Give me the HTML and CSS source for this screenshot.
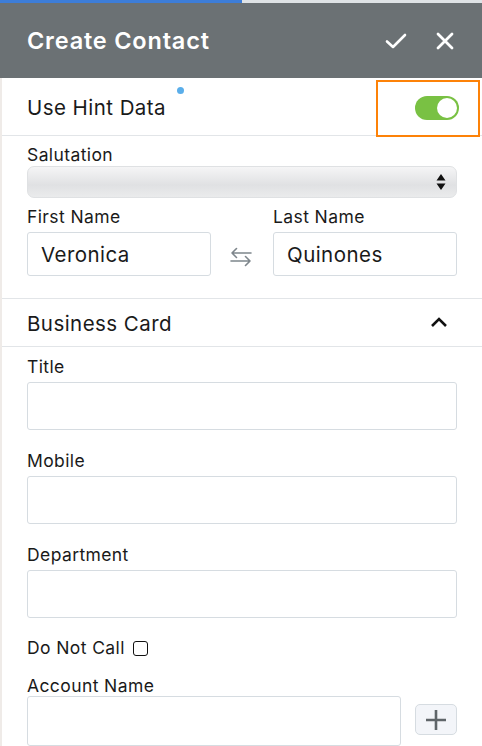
FILE: index.html
```html
<!DOCTYPE html>
<html>
<head>
<meta charset="utf-8">
<link rel="stylesheet" href="styles.css">
</head>
<body>
<div class="panel">
  <div class="progress"><div class="progress-fill"></div></div>
  <header class="topbar">
    <h1 class="topbar-title">Create Contact</h1>
    <div class="topbar-actions">
      <svg class="icon-check" width="22" height="18" viewBox="0 0 22 18"><path d="M2 9.5 L8 15 L20 3" fill="none" stroke="#fff" stroke-width="2.6" stroke-linecap="round" stroke-linejoin="round"/></svg>
      <svg class="icon-close" width="20" height="20" viewBox="0 0 20 20"><path d="M3 3 L17 17 M17 3 L3 17" fill="none" stroke="#fff" stroke-width="2.8" stroke-linecap="round"/></svg>
    </div>
  </header>

  <div class="hint-row">
    <div class="hint-label">Use Hint Data<span class="hint-dot"></span></div>
    <div class="toggle"><span class="toggle-knob"></span></div>
    <div class="highlight"></div>
  </div>

  <div class="section">
    <div class="label label-first">Salutation</div>
    <div class="select">
      <svg class="select-arrows" width="10" height="18" viewBox="0 0 10 18"><path d="M5 1 L9.5 7.5 L0.5 7.5 Z M5 17 L9.5 10.5 L0.5 10.5 Z" fill="#111"/></svg>
    </div>

    <div class="name-row">
      <div class="name-col">
        <div class="label">First Name</div>
        <div class="input input-name">Veronica</div>
      </div>
      <div class="swap">
        <svg width="24" height="20" viewBox="0 0 24 20"><path d="M22 6 H3 M7.5 1.5 L3 6 M7.5 10.5 L3 6 M2 14 H21 M16.5 9.5 L21 14 M16.5 18.5 L21 14" fill="none" stroke="#7e868c" stroke-width="1.6" stroke-linecap="round" stroke-linejoin="round"/></svg>
      </div>
      <div class="name-col">
        <div class="label">Last Name</div>
        <div class="input input-name">Quinones</div>
      </div>
    </div>
  </div>

  <div class="group-head">
    <span class="group-title">Business Card</span>
    <svg class="chevron" width="18" height="12" viewBox="0 0 18 12"><path d="M2 10 L9 3 L16 10" fill="none" stroke="#111" stroke-width="2.6" stroke-linejoin="miter"/></svg>
  </div>

  <div class="section section-card">
    <div class="label label-first">Title</div>
    <div class="input input-tall"></div>

    <div class="label label-gap">Mobile</div>
    <div class="input input-tall"></div>

    <div class="label label-gap">Department</div>
    <div class="input input-tall"></div>

    <div class="check-row">Do Not Call <span class="checkbox"></span></div>

    <div class="label label-account">Account Name</div>
    <div class="account-row">
      <div class="input input-account"></div>
      <div class="add-btn">
        <svg width="22" height="22" viewBox="0 0 22 22"><path d="M11 1 V21 M1 11 H21" fill="none" stroke="#5f6569" stroke-width="2.6"/></svg>
      </div>
    </div>
  </div>
</div>
</body>
</html>
```

FILE: styles.css
```css
* { box-sizing: border-box; }
html, body { margin: 0; padding: 0; }
body {
  background: #efebe8;
  font-family: Inter, "Noto Sans", "Liberation Sans", sans-serif;
  color: #1a1a1a;
  width: 482px;
  height: 746px;
  overflow: hidden;
}
.panel {
  margin-left: 2px;
  background: #fff;
  min-height: 746px;
}
.progress {
  height: 3px;
  background: #dfe3e6;
  margin-left: -2px;
}
.progress-fill {
  width: 242px;
  height: 3px;
  background: #3d7dd8;
}
.topbar {
  height: 75px;
  background: #6b7174;
  display: flex;
  align-items: center;
  justify-content: space-between;
  margin-left: -2px;
  padding: 0 27px 0 27px;
}
.topbar-title {
  margin: 0;
  color: #fff;
  font-size: 23.5px;
  font-weight: 600;
  letter-spacing: 0.8px;
}
.topbar-actions {
  display: flex;
  align-items: center;
  gap: 28px;
}
.hint-row {
  position: relative;
  height: 58px;
  border-bottom: 1px solid #e2e5e8;
  display: flex;
  align-items: center;
  justify-content: space-between;
  padding: 0 23px 0 25px;
}
.hint-label {
  font-size: 20.5px;
  letter-spacing: 0.45px;
  position: relative;
  margin-top: 2px;
}
.hint-dot {
  position: absolute;
  right: -18px;
  top: -8px;
  width: 7px;
  height: 7px;
  border-radius: 50%;
  background: #5aaeea;
}
.toggle {
  width: 44px;
  height: 24px;
  border-radius: 12px;
  background: #79c143;
  display: flex;
  align-items: center;
  justify-content: flex-end;
  padding: 2px;
  margin-top: 2px;
}
.toggle-knob {
  width: 20px;
  height: 20px;
  border-radius: 50%;
  background: #fff;
}
.highlight {
  position: absolute;
  left: 374px;
  top: 2px;
  width: 104px;
  height: 57px;
  border: 2px solid #fd8208;
}
.section {
  padding: 0 25px 0 25px;
}
.label {
  font-size: 17.5px;
  letter-spacing: 0.4px;
  line-height: 20px;
  margin-bottom: 5px;
}
.label-first { margin-top: 9px; margin-bottom: 1px; }
.section-card .label-first { margin-top: 10px; margin-bottom: 5px; }
.label-gap { margin-top: 21px; }
.select {
  height: 32px;
  border-radius: 7px;
  background: linear-gradient(#f5f5f6, #e0e1e3 60%, #eaebec);
  border: 1px solid #dfe1e3;
  display: flex;
  align-items: center;
  justify-content: flex-end;
  padding-right: 10px;
}
.name-row {
  display: flex;
  align-items: flex-end;
  margin-top: 9px;
  padding-bottom: 22px;
  border-bottom: 1px solid #e2e5e8;
  margin-left: -25px;
  margin-right: -25px;
  padding-left: 25px;
  padding-right: 25px;
}
.name-col { width: 184px; }
.swap {
  flex: 1;
  height: 44px;
  display: flex;
  align-items: center;
  justify-content: center;
  padding-top: 6px;
  padding-right: 2px;
}
.input {
  border: 1px solid #d6dce1;
  border-radius: 3px;
  background: #fff;
}
.input-name {
  height: 44px;
  font-size: 20.5px;
  letter-spacing: 0.45px;
  display: flex;
  align-items: center;
  padding-left: 13px;
  padding-top: 1px;
}
.group-head {
  height: 48px;
  border-bottom: 1px solid #e2e5e8;
  display: flex;
  align-items: center;
  justify-content: space-between;
  padding: 0 34px 0 25px;
}
.group-title { font-size: 20.5px; letter-spacing: 0.45px; margin-top: 2px; }
.chevron { margin-top: -2px; }
.input-tall { height: 48px; }
.check-row {
  margin-top: 20px;
  font-size: 17.5px;
  letter-spacing: 0.4px;
  line-height: 20px;
  display: flex;
  align-items: center;
  gap: 8px;
}
.checkbox {
  width: 15px;
  height: 15px;
  border: 1.6px solid #111;
  border-radius: 3px;
  display: inline-block;
}
.label-account { margin-top: 18px; margin-bottom: 0; }
.account-row {
  display: flex;
  align-items: flex-start;
  gap: 14px;
}
.input-account { flex: 1; height: 50px; }
.add-btn {
  width: 42px;
  height: 31px;
  margin-top: 8px;
  border: 1px solid #d6dce1;
  border-radius: 5px;
  background: #f3f5f9;
  display: flex;
  align-items: center;
  justify-content: center;
}
```
